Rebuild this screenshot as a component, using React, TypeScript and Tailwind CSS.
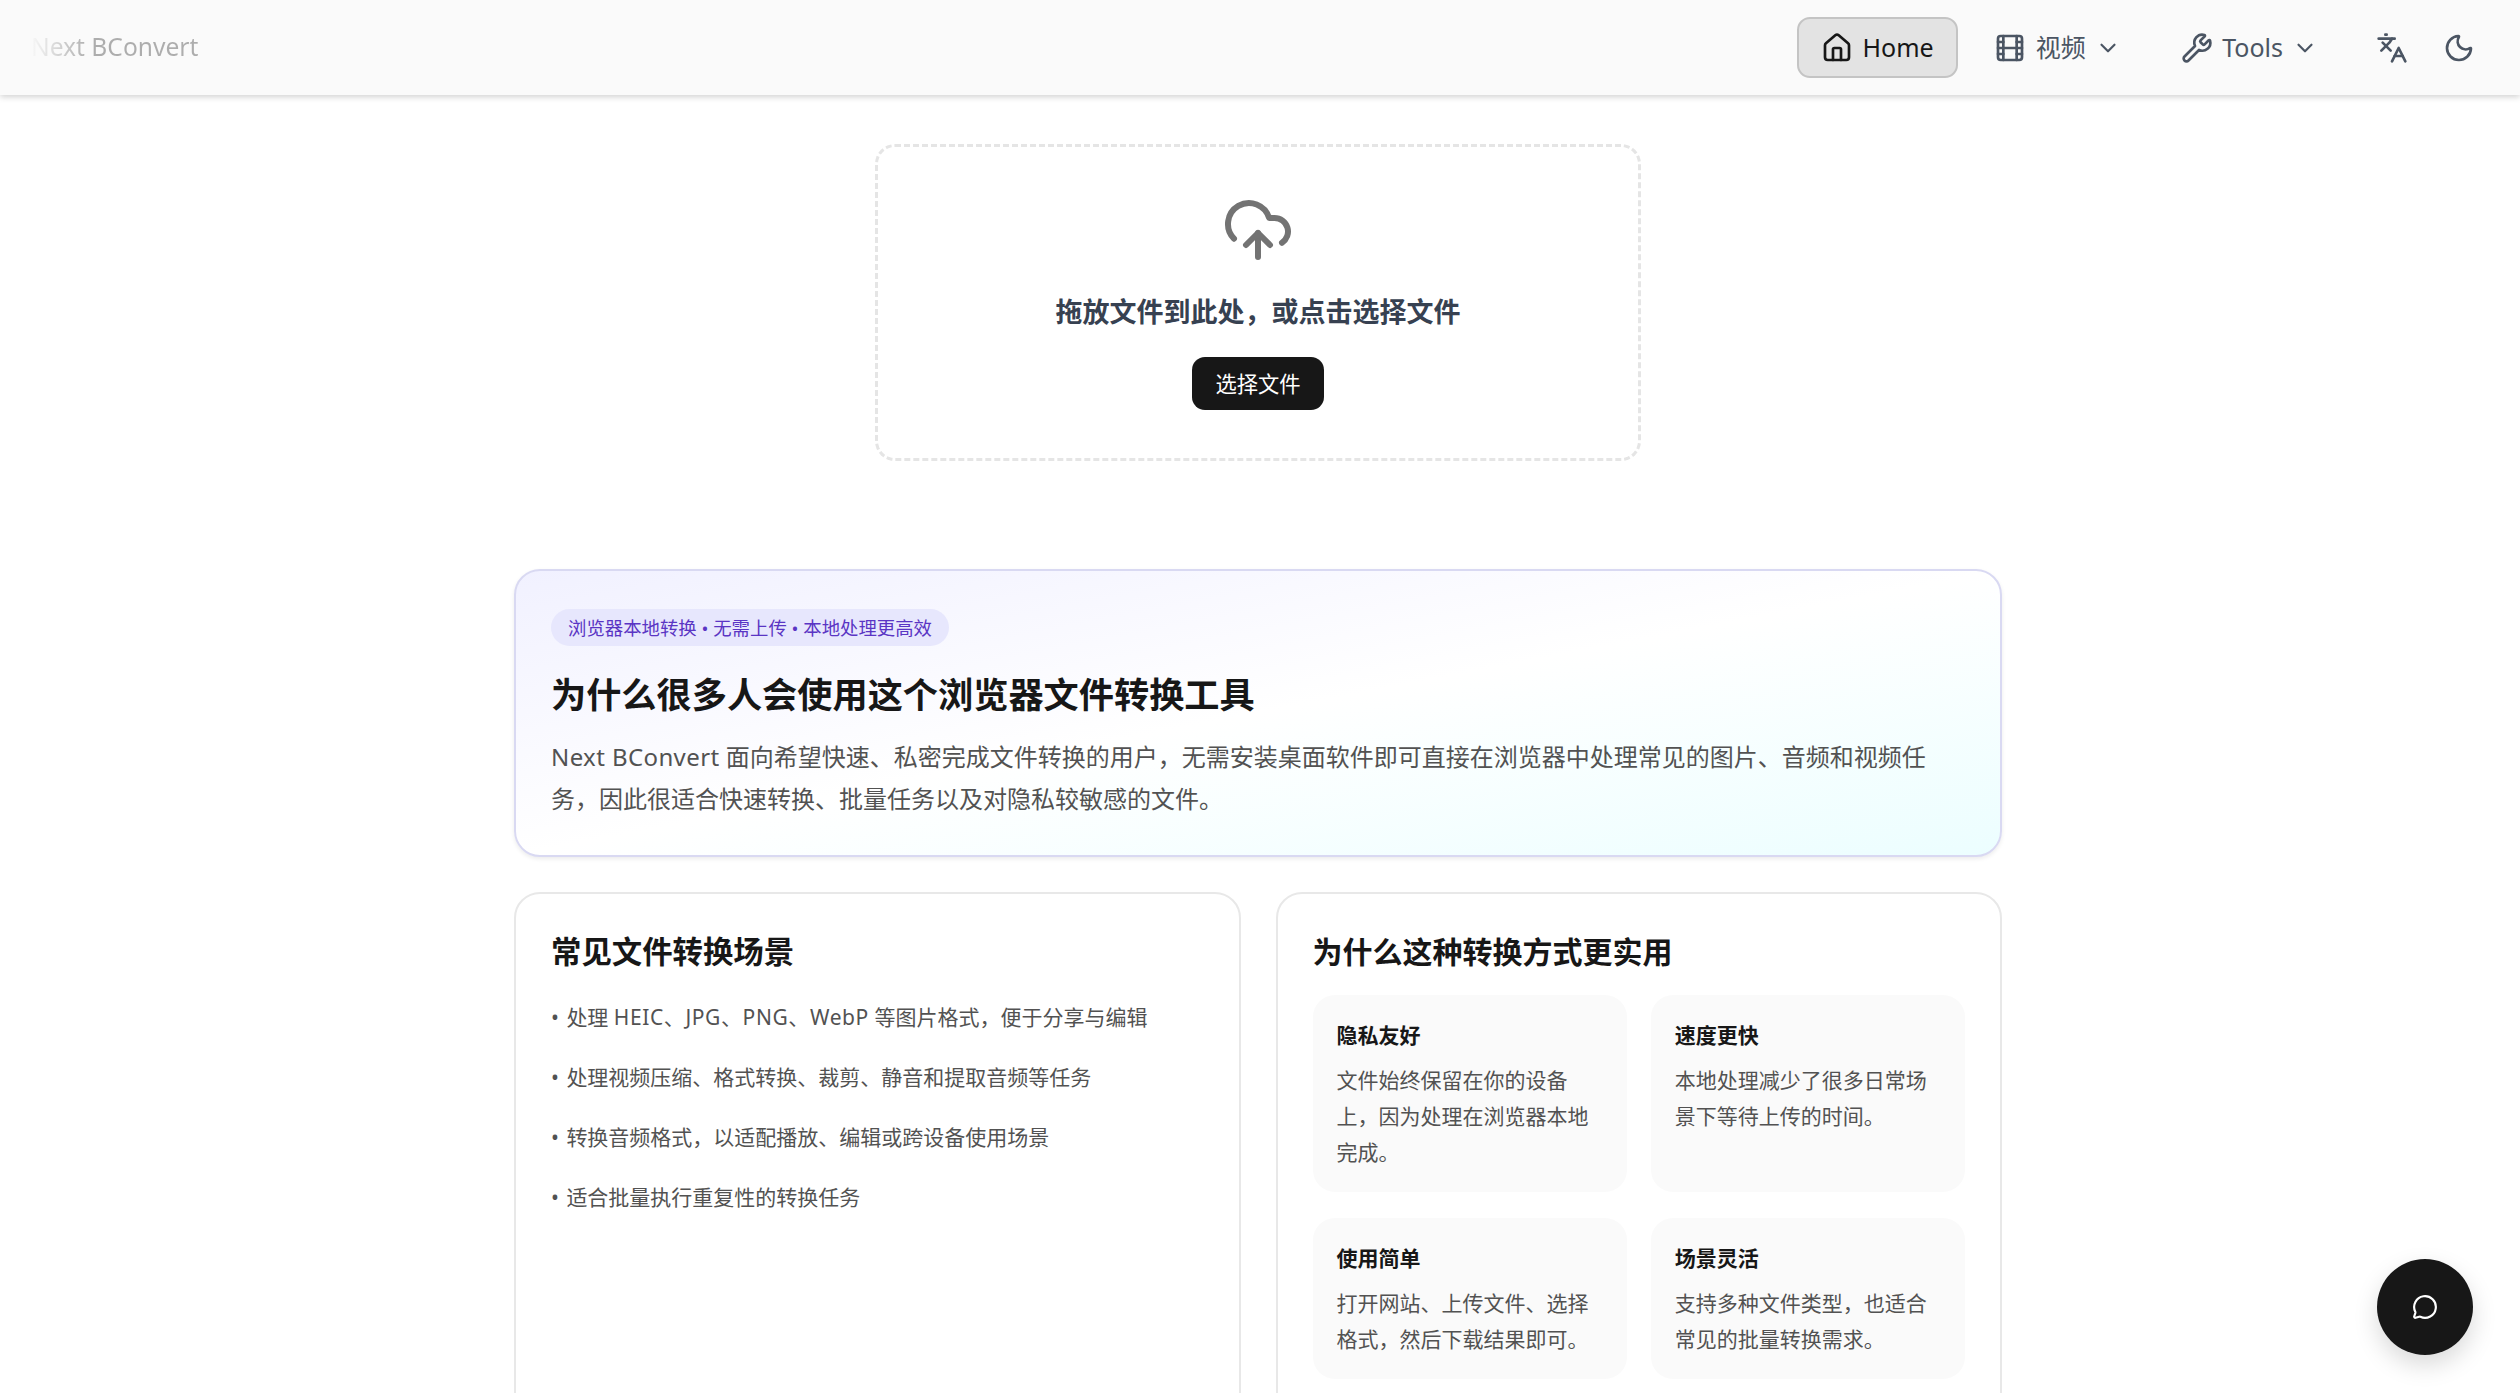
import { ChevronDown, CloudUpload, Film, House, Languages, MessageCircle, Moon, Wrench } from "lucide-react";

const scenes = [
  <>
    处理 <span className="tracking-[0.6px]">HEIC、JPG、PNG、WebP</span> 等图片格式，便于分享与编辑
  </>,
  "处理视频压缩、格式转换、裁剪、静音和提取音频等任务",
  "转换音频格式，以适配播放、编辑或跨设备使用场景",
  "适合批量执行重复性的转换任务",
];

const reasons = [
  { title: "隐私友好", body: "文件始终保留在你的设备上，因为处理在浏览器本地完成。", height: "h-[197px]" },
  { title: "速度更快", body: "本地处理减少了很多日常场景下等待上传的时间。", height: "h-[197px]" },
  { title: "使用简单", body: "打开网站、上传文件、选择格式，然后下载结果即可。", height: "h-[161px]" },
  { title: "场景灵活", body: "支持多种文件类型，也适合常见的批量转换需求。", height: "h-[161px]" },
];

const Header = () => (
  <header className="relative z-10 flex h-[95px] items-center justify-between bg-[#fafafa] pl-[31px] pr-[45px] shadow-[0_2px_6px_rgba(0,0,0,0.18)]">
    <span className="bg-linear-to-r from-[#f8f8f8] to-[#adadad] to-35% bg-clip-text text-[24.6px] text-transparent">
      Next BConvert
    </span>
    <nav className="flex items-center">
      <a className="flex h-[61px] w-[161px] items-center justify-center gap-[10px] rounded-[13px] border-2 border-[#c4c4c4] bg-[#e3e3e3] text-[25px] text-[#171717]">
        <House size={32} strokeWidth={2} />
        Home
      </a>
      <a className="ml-[36px] flex items-center text-[25px] text-[#4b5563]">
        <Film size={32} className="mr-[10px]" />
        视频
        <ChevronDown size={26} className="ml-[9px]" />
      </a>
      <a className="ml-[60.5px] flex items-center gap-[9px] text-[25px] text-[#4b5563]">
        <Wrench size={32} />
        Tools
        <ChevronDown size={26} />
      </a>
      <button className="ml-[58px] text-[#4b5563]">
        <Languages size={32} />
      </button>
      <button className="ml-[35px] text-[#4b5563]">
        <Moon size={32} />
      </button>
    </nav>
  </header>
);

const Uploader = () => (
  <div className="mt-[49px] flex h-[317px] w-[766px] flex-col items-center rounded-[20px] border-[3px] border-dashed border-[#e5e5e5] pt-[47px]">
    <CloudUpload size={72} className="text-[#737373]" />
    <h3 className="mt-[26px] text-[27px] leading-[40px] font-semibold text-[#374151]">
      拖放文件到此处，或点击选择文件
    </h3>
    <button className="mt-[25px] h-[53px] w-[132px] rounded-[13px] bg-[#171717] text-[21.3px] text-white">
      选择文件
    </button>
  </div>
);

export default function App() {
  return (
    <div className="h-screen overflow-hidden bg-white font-['Noto_Sans','Noto_Sans_CJK_SC',sans-serif]">
      <Header />
      <main className="flex flex-col items-center pr-[4px]">
        <Uploader />

        <section className="mt-[108px] h-[288px] w-[1488px] rounded-[26px] border-2 border-[#d9d9f2] bg-linear-to-br from-[#f1f1ff] via-white to-[#ecfeff] px-[35px] pt-[38px] shadow-[0_2px_4px_rgba(0,0,0,0.08)]">
          <span className="inline-block h-[37px] rounded-full bg-[#e7e7fd] px-[17px] text-[18.4px] leading-[37px] text-[#5a35c4]">
            浏览器本地转换 • 无需上传 • 本地处理更高效
          </span>
          <h2 className="mt-[23px] text-[35.2px] leading-[50px] font-bold text-[#171717]">
            为什么很多人会使用这个浏览器文件转换工具
          </h2>
          <p className="mt-[17px] text-[24px] leading-[42px] text-[#525252]">
            <span className="tracking-[0.4px]">Next BConvert</span> 面向希望快速、私密完成文件转换的用户，无需安装桌面软件即可直接在浏览器中处理常见的图片、音频和视频任务，因此很适合快速转换、批量任务以及对隐私较敏感的文件。
          </p>
        </section>

        <section className="mt-[35px] grid w-[1488px] grid-cols-2 gap-[35px]">
          <div className="h-[700px] rounded-[26px] border-2 border-[#e8e8e8] px-[35px] pt-[36px]">
            <h2 className="text-[30.4px] leading-[44px] font-bold text-[#171717]">常见文件转换场景</h2>
            <ul className="mt-[28px] flex flex-col gap-[30px] text-[21px] leading-[30px] text-[#525252]">
              {scenes.map((s, i) => (
                <li key={i}>
                  <span className="mr-[2px]">•</span> {s}
                </li>
              ))}
            </ul>
          </div>

          <div className="h-[700px] rounded-[26px] border-2 border-[#e8e8e8] px-[35px] pt-[36px]">
            <h2 className="text-[30px] leading-[44px] font-bold text-[#171717]">为什么这种转换方式更实用</h2>
            <div className="mt-[21px] grid grid-cols-2 gap-x-[24px] gap-y-[26px]">
              {reasons.map((r) => (
                <div key={r.title} className={`${r.height} rounded-[22px] bg-[#fafafa] px-[24px] pt-[24px]`}>
                  <h3 className="text-[21px] leading-[32px] font-semibold text-[#171717]">{r.title}</h3>
                  <p className="mt-[11px] text-[21px] leading-[36px] text-[#525252]">{r.body}</p>
                </div>
              ))}
            </div>
          </div>
        </section>
      </main>

      <button className="fixed right-[47px] bottom-[38px] flex h-[96px] w-[96px] items-center justify-center rounded-full bg-[#171717] text-white shadow-[0_10px_24px_rgba(0,0,0,0.15)]">
        <MessageCircle size={26} />
      </button>
    </div>
  );
}
